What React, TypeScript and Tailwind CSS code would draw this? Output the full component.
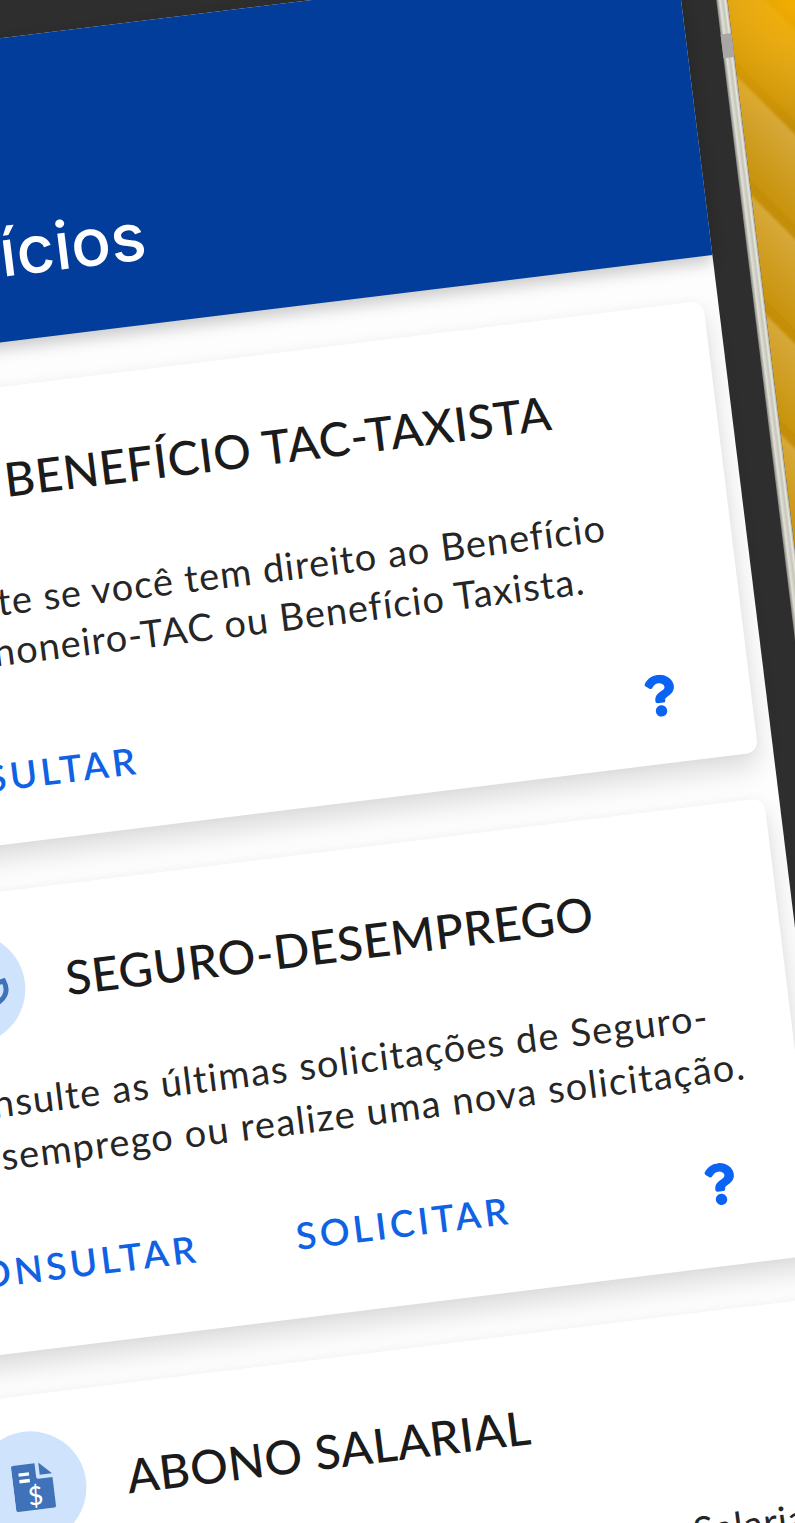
import React from "react";
import { FaQuestion } from "react-icons/fa";

function Circle({ children }: { children?: React.ReactNode }) {
  return (
    <div className="w-[112px] h-[112px] rounded-full bg-[#cfe4fc] flex items-center justify-center shrink-0">
      {children}
    </div>
  );
}

function DocIcon() {
  return (
    <svg width="42" height="52" viewBox="0 0 44 52" className="ml-[8px]">
      <path d="M2 1.5 H25 V16 a2 2 0 0 0 2 2 H42 V48 a2 2 0 0 1 -2 2 H2 a2 2 0 0 1 -2 -2 V3.5 a2 2 0 0 1 2 -2 Z" fill="#3f72b8" />
      <path d="M29 1 L42 14 H29 Z" fill="#3f72b8" />
      <rect x="7" y="10" width="11" height="3.5" fill="#fff" />
      <rect x="7" y="17" width="11" height="3.5" fill="#fff" />
      <text x="22" y="45" textAnchor="middle" fontSize="27" fontWeight="500" fontFamily="Lato, sans-serif" fill="#fff">$</text>
    </svg>
  );
}

function HandIcon() {
  return (
    <svg width="80" height="80" viewBox="0 0 80 80" fill="none">
      <path d="M66 38 L75 36 C79 46 75 54 64 58" stroke="#3f72b8" strokeWidth="5" strokeLinecap="round" />
    </svg>
  );
}

function Card({
  title,
  body,
  icon,
  buttons,
  className,
  bodyClass,
  actionsClass,
}: {
  title: string;
  body: React.ReactNode;
  icon: React.ReactNode;
  buttons: string[];
  className: string;
  bodyClass: string;
  actionsClass: string;
}) {
  return (
    <div className={`rounded-xl bg-white shadow-[0_14px_26px_rgba(0,0,0,0.13),0_0_10px_rgba(0,0,0,0.03)] pl-[33px] pr-[70px] shrink-0 ${className}`}>
      <div className="flex items-center gap-[41px]">
        <Circle>{icon}</Circle>
        <h2 className="text-[47px] leading-[56px] font-medium tracking-[0.6px] text-[#1b1b1b] whitespace-nowrap">{title}</h2>
      </div>
      <p className={`text-[38px] text-[#262626] whitespace-nowrap ${bodyClass}`}>{body}</p>
      {buttons.length > 0 && (
        <div className={`flex items-center gap-[98px] pl-[5px] ${actionsClass}`}>
          {buttons.map((b) => (
            <span key={b} className="text-[37px] leading-[44px] font-semibold tracking-[0.1em] text-[#0f62e4]">{b}</span>
          ))}
          <FaQuestion className="ml-auto text-[#0a63f2]" size={42} />
        </div>
      )}
    </div>
  );
}

export default function App() {
  return (
    <div
      className="w-[795px] h-[1523px] overflow-hidden bg-[radial-gradient(circle_at_100%_0%,rgba(245,175,0,0.95),rgba(245,175,0,0)_130px),repeating-linear-gradient(45deg,#c9930c_0px,#d6a838_62px,#c48e08_66px,#c48e08_74px),linear-gradient(#e8ab10,#e8ab10)] font-['Lato','Liberation_Sans',sans-serif]"
    >
      <div className="ml-[-300px] w-[1022px] h-[1900px] rotate-[-7deg] origin-[300px_0px] bg-[#2e2e2e] flex">
        <div className="flex-1 min-w-0 pt-[38px] pr-[35px]">
          <div className="w-full h-full bg-[#fdfdfd] flex flex-col">
            <div className="h-[302px] bg-[#023d9b] shadow-[0_7px_15px_rgba(0,0,0,0.2)] pl-[83px] flex items-end pb-[47px] shrink-0">
              <h1 className="text-[66px] leading-[84px] font-medium text-white font-['Inter',sans-serif]">Benefícios</h1>
            </div>
            <div className="flex flex-col pl-[60px] pr-[15px] pt-[44px]">
              <Card
                title="BENEFÍCIO TAC-TAXISTA"
                icon={<DocIcon />}
                body={<>Consulte se você tem direito ao Benefício<br />Caminhoneiro-TAC ou Benefício Taxista.</>}
                buttons={["CONSULTAR"]}
                className="h-[455px] pt-[36px] mb-[46px]"
                bodyClass="ml-[10px] tracking-[0.028em] mt-[39px] leading-[50px]"
                actionsClass="mt-[78px]"
              />
              <Card
                title="SEGURO-DESEMPREGO"
                icon={<HandIcon />}
                body={<>Consulte as últimas solicitações de Seguro-<br />Desemprego ou realize uma nova solicitação.</>}
                buttons={["CONSULTAR", "SOLICITAR"]}
                className="h-[460px] pt-[37px] mb-[43px]"
                bodyClass="ml-[16px] tracking-[0.034em] mt-[34px] leading-[53px]"
                actionsClass="mt-[67px]"
              />
              <Card
                title="ABONO SALARIAL"
                icon={<DocIcon />}
                body={<>Verifique se você tem direito ao Abono Salarial</>}
                buttons={[]}
                className="h-[460px] pt-[36px]"
                bodyClass="ml-[20px] tracking-[0.022em] mt-[41px] leading-[53px]"
                actionsClass=""
              />
            </div>
          </div>
        </div>
        <div className="w-[11px] shrink-0 bg-[linear-gradient(90deg,#85847e,#e2e1d8_30%,#c6c5ba_60%,#e9e8e0_80%,#aaa89c)] pt-[122px]">
          <div className="h-[24px] bg-[#a8a7a6]" />
        </div>
      </div>
    </div>
  );
}
